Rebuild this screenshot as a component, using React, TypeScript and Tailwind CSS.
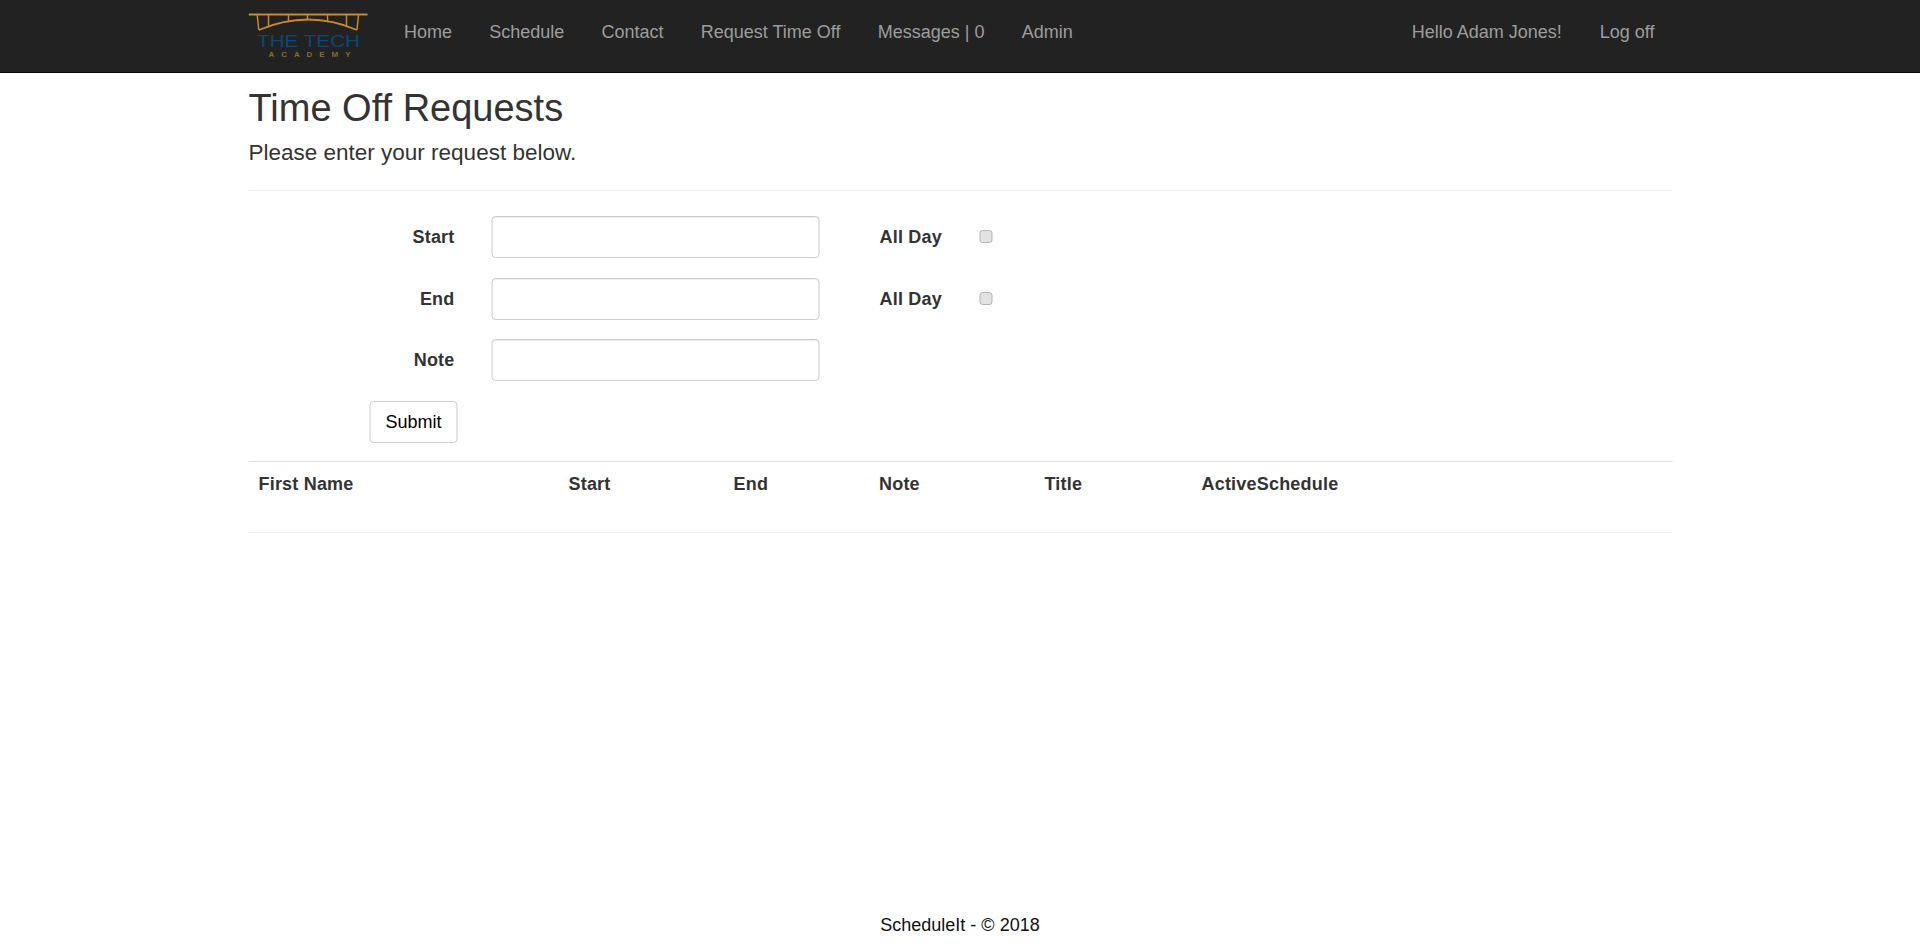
import React from "react";

const navLeft = ["Home", "Schedule", "Contact", "Request Time Off", "Messages | 0", "Admin"];
const columns = ["First Name", "Start", "End", "Note", "Title", "ActiveSchedule"];

function Logo() {
  return (
    <svg width="120" height="60" viewBox="0 0 120 60" className="block">
      <g fill="none" stroke="#c98a25">
        <path d="M0 1.500H119" strokeWidth="2" />
        <path d="M8.700 2L10.300 17M20 2V13M40 2V8.500M59 2V7M79 2V8.500M98 2V13M110 2L108.500 17" strokeWidth="1.500" />
        <path d="M10.300 17Q60 -4 108.500 17" strokeWidth="1.800" />
      </g>
      <text x="60" y="34" textAnchor="middle" fill="#0a4878" fontFamily="Liberation Sans" fontSize="16" textLength="103" lengthAdjust="spacingAndGlyphs">THE TECH</text>
      <text x="61" y="44.300" textAnchor="middle" fill="#8a6a2e" fontFamily="Liberation Sans" fontWeight="bold" fontSize="8" textLength="82">ACADEMY</text>
    </svg>
  );
}

function Field({ label, allDay }: { label: string; allDay?: boolean }) {
  return (
    <div className="flex items-center h-[42px] mb-[19.500px]">
      <label className="w-[206px] text-right font-bold text-[18px] tracking-[0.2px] pt-[1px]">{label}</label>
      <input className="ml-[37px] w-[328px] h-[42px] border border-[#ccc] rounded-[4px] bg-white shadow-[inset_0_1px_1px_rgba(0,0,0,0.075)]" />
      {allDay && (
        <>
          <span className="ml-[60px] w-[100px] font-bold text-[18px] tracking-[0.2px] pt-[1px]">All Day</span>
          <span className="w-[13px] h-[13px] rounded-[3px] border border-[#b5b5b5] bg-[#e2e2e2] mb-[1px]" />
        </>
      )}
    </div>
  );
}

export default function App() {
  return (
    <div className="min-h-[948px] flex flex-col bg-white text-[#333] font-['Liberation_Sans',Arial,sans-serif] text-[18px]">
      <nav className="h-[73px] bg-[#222] border-b border-[#080808]">
        <div className="mx-auto w-[1424px] h-full flex items-start translate-x-[0.500px]">
          <div className="w-[137px] pt-[13px]"><Logo /></div>
          <div className="flex text-[#9d9d9d]">
            {navLeft.map((n) => (
              <a key={n} className="px-[18.600px] leading-[64px] whitespace-nowrap">{n}</a>
            ))}
          </div>
          <div className="ml-auto flex text-[#9d9d9d] mr-[-1px]">
            {["Hello Adam Jones!", "Log off"].map((n) => (
              <a key={n} className="px-[19px] leading-[64px] whitespace-nowrap">{n}</a>
            ))}
          </div>
        </div>
      </nav>
      <main className="mx-auto w-[1424px] flex-1 translate-x-[0.500px]">
        <h2 className="text-[38px] leading-[43px] mt-[14px] font-normal">Time Off Requests</h2>
        <h4 className="text-[22.500px] leading-[26px] mt-[10px] font-normal">Please enter your request below.</h4>
        <hr className="mt-[24px] mb-[25px] border-t border-[#eee]" />
        <Field label="Start" allDay />
        <Field label="End" allDay />
        <Field label="Note" />
        <div className="h-[42px] pl-[121px]">
          <button className="w-[88px] h-[42px] border border-[#ccc] rounded-[4px] bg-white text-[18px] text-black pt-[1px]">Submit</button>
        </div>
        <div className="mt-[18px] border-t border-[#ddd]">
          <div className="grid grid-cols-[310px_165px_145.500px_165.500px_157px_1fr] pl-[10px] pt-[10px] h-[71px] border-b border-[#eee] font-bold leading-[24px] tracking-[0.2px]">
            {columns.map((c) => (
              <div key={c}>{c}</div>
            ))}
          </div>
        </div>
      </main>
      <footer className="text-center text-[#111] h-[35px] leading-[24px]">ScheduleIt - © 2018</footer>
    </div>
  );
}
